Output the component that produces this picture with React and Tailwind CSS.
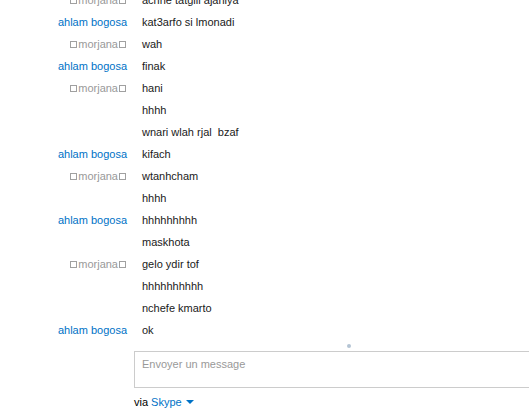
import React from 'react';

const rows = [
    { who: 'morjana', text: 'achne tatgili ajahiya' },
    { who: 'ahlam', text: 'kat3arfo si lmonadi' },
    { who: 'morjana', text: 'wah' },
    { who: 'ahlam', text: 'finak' },
    { who: 'morjana', text: 'hani' },
    { who: null, text: 'hhhh' },
    { who: null, text: 'wnari wlah rjal  bzaf' },
    { who: 'ahlam', text: 'kifach' },
    { who: 'morjana', text: 'wtanhcham' },
    { who: null, text: 'hhhh' },
    { who: 'ahlam', text: 'hhhhhhhhh' },
    { who: null, text: 'maskhota' },
    { who: 'morjana', text: 'gelo ydir tof' },
    { who: null, text: 'hhhhhhhhhh' },
    { who: null, text: 'nchefe kmarto' },
    { who: 'ahlam', text: 'ok' },
];

const Box = () => (
    <span className="inline-block w-[7px] h-[7px] border border-[#a0a0a0] mx-[1px]" />
);

const Sender = ({ who }) => {
    if (who === 'ahlam') return <span className="text-[#0072c6]">ahlam bogosa</span>;
    if (who === 'morjana')
        return (
            <span className="text-[#999999] flex items-center">
                <Box />morjana<Box />
            </span>
        );
    return null;
};

export default function App() {
    return (
        <div
            className="w-[529px] h-[411px] overflow-hidden bg-white text-[11px] leading-[22px]"
            style={{ fontFamily: '"Liberation Sans", Arial, sans-serif' }}
        >
            <div className="-mt-[11px]">
                {rows.map((r, i) => (
                    <div key={i} className="flex h-[22px] items-center">
                        <div className="w-[127px] flex justify-end">
                            <Sender who={r.who} />
                        </div>
                        <div className="pl-[15px] text-[#1a1a1a] whitespace-pre">{r.text}</div>
                    </div>
                ))}
            </div>

            <div className="pl-[134px]">
                <div className="h-[7px] flex items-end">
                    <span className="ml-[213px] w-[4px] h-[4px] rounded-full bg-[#b4c4d4]" />
                </div>
                <div className="mt-[3px] h-[37px] border border-[#cccccc] border-r-0 px-[7px] pt-[4px] text-[#999999] leading-[16px]">
                    Envoyer un message
                </div>
                <div className="mt-[6px] flex items-center text-black leading-[16px]">
                    via <span className="ml-[3px] text-[#0072c6]">Skype</span>
                    <svg width="8" height="5" viewBox="0 0 8 5" className="ml-[4px]">
                        <path d="M0 0h8L4 4z" fill="#0072c6" />
                    </svg>
                </div>
            </div>
        </div>
    );
}
